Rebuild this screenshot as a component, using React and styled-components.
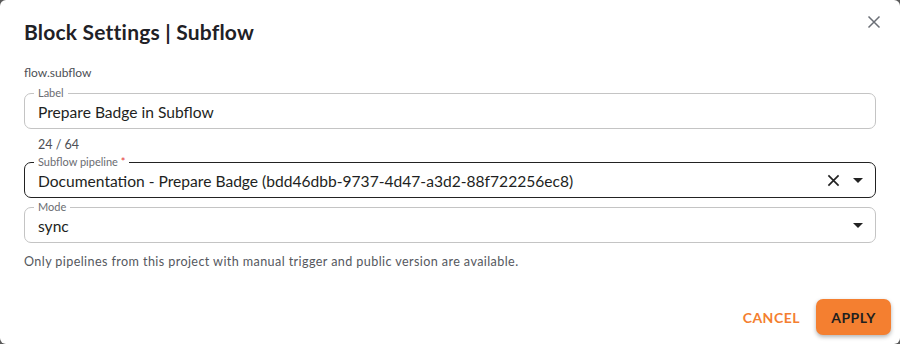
import styled, { createGlobalStyle } from 'styled-components';

const GlobalStyle = createGlobalStyle`
    html, body {
        margin: 0;
        padding: 0;
        background: #5a5a5a;
    }
    body {
        font-family: 'Lato', 'Noto Sans', sans-serif;
    }
`;

const ACCENT = '#f47f30';

const Dialog = styled.div`
    width: 900px;
    height: 344px;
    box-sizing: border-box;
    background: #fff;
    border-radius: 6px;
    padding: 17px 24px 0 24px;
    display: flex;
    flex-direction: column;
    position: relative;
`;

const Header = styled.div`
    display: flex;
    align-items: center;
    height: 28px;
`;

const Title = styled.h2`
    margin: 0;
    font-size: 21px;
    font-weight: 700;
    color: #1f2126;
    letter-spacing: 0.2px;
`;

const CloseButton = styled.button`
    position: absolute;
    top: 15px;
    right: 17px;
    width: 16px;
    height: 16px;
    border: none;
    background: none;
    padding: 0;
    cursor: pointer;
    color: #6b6f76;
    display: flex;
`;

const Path = styled.div`
    margin-top: 20px;
    font-size: 12px;
    color: #4d4f55;
`;

const Field = styled.div`
    position: relative;
    margin-top: ${({ $top }) => $top || 0}px;
    padding: 0 14px 0 13px;
    height: 36px;
    box-sizing: border-box;
    border: 1px solid ${({ $strong }) => ($strong ? '#222' : '#c4c4c4')};
    border-radius: 7px;
    display: flex;
    align-items: center;
`;

const FieldLabel = styled.span`
    position: absolute;
    top: -7px;
    left: 9px;
    font-size: 11px;
    line-height: 12px;
    color: #6a6c71;
    padding: 0 4px;
    background: #fff;
`;

const Required = styled.span`
    color: #e53935;
`;

const Value = styled.div`
    flex: 1;
    font-size: 15.6px;
    color: #1e1f22;
    margin-top: 1px;
    white-space: nowrap;
`;

const Adornments = styled.div`
    display: flex;
    align-items: center;
    gap: 13px;
    margin-right: -2px;
`;

const Counter = styled.div`
    font-size: 12.5px;
    color: #4d4f55;
    margin: 8px 0 0 14px;
`;

const Helper = styled.div`
    font-size: 12.6px;
    letter-spacing: 0.4px;
    color: #55585e;
    margin-top: 11px;
`;

const Footer = styled.div`
    margin-top: auto;
    display: flex;
    justify-content: flex-end;
    align-items: center;
    gap: 16px;
    padding-bottom: 9px;
    margin-right: -15px;
`;

const TextButton = styled.button`
    border: none;
    background: none;
    color: ${ACCENT};
    font-family: inherit;
    font-size: 14px;
    font-weight: 700;
    letter-spacing: 0.5px;
    padding: 8px 0;
    cursor: pointer;
`;

const FilledButton = styled.button`
    border: none;
    background: ${ACCENT};
    color: #1f1f1f;
    font-family: inherit;
    font-size: 14px;
    font-weight: 700;
    letter-spacing: 0.5px;
    width: 75px;
    height: 36px;
    border-radius: 7px;
    box-shadow: 0 2px 4px rgba(0, 0, 0, 0.3);
    cursor: pointer;
`;

const ClearIcon = styled.span`
    color: #222;
    display: flex;
`;

const XIcon = ({ size = 14, width = 1.6 }) => (
    <svg width={size} height={size} viewBox="0 0 14 14" fill="none" stroke="currentColor" strokeWidth={width}>
        <path d="M1.5 1.5 L12.5 12.5 M12.5 1.5 L1.5 12.5" />
    </svg>
);

const Caret = () => (
    <svg width="10" height="5" viewBox="0 0 10 5">
        <path d="M0 0 L10 0 L5 5 Z" fill="#222" />
    </svg>
);

const App = () => (
    <>
        <GlobalStyle />
        <Dialog>
            <Header>
                <Title>Block Settings | Subflow</Title>
            </Header>
            <CloseButton aria-label="close">
                <XIcon size={14} width={1.5} />
            </CloseButton>
            <Path>flow.subflow</Path>
            <Field $top={13}>
                <FieldLabel>Label</FieldLabel>
                <Value>Prepare Badge in Subflow</Value>
            </Field>
            <Counter>24 / 64</Counter>
            <Field $top={10} $strong>
                <FieldLabel>
                    Subflow pipeline <Required>*</Required>
                </FieldLabel>
                <Value>Documentation - Prepare Badge (bdd46dbb-9737-4d47-a3d2-88f722256ec8)</Value>
                <Adornments>
                    <ClearIcon>
                        <XIcon size={13} width={1.8} />
                    </ClearIcon>
                    <Caret />
                </Adornments>
            </Field>
            <Field $top={9}>
                <FieldLabel>Mode</FieldLabel>
                <Value>sync</Value>
                <Adornments>
                    <Caret />
                </Adornments>
            </Field>
            <Helper>Only pipelines from this project with manual trigger and public version are available.</Helper>
            <Footer>
                <TextButton>CANCEL</TextButton>
                <FilledButton>APPLY</FilledButton>
            </Footer>
        </Dialog>
    </>
);

export default App;
